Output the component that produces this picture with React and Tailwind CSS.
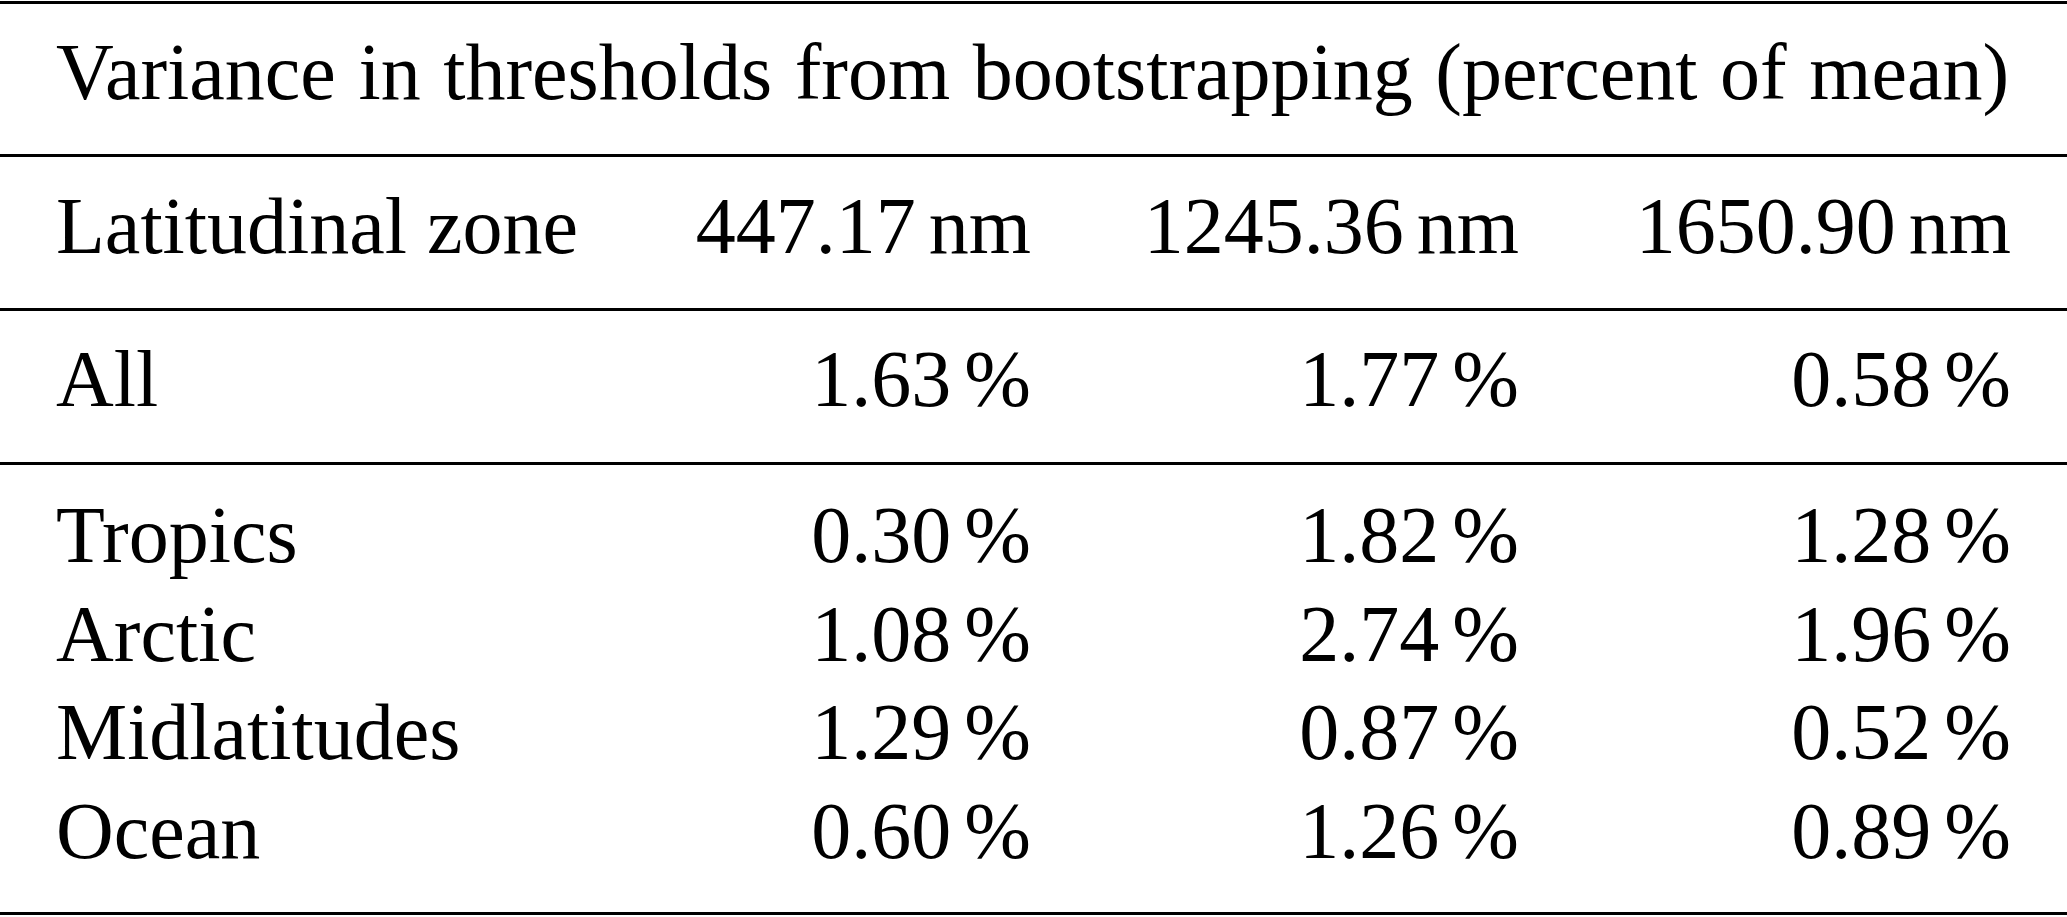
import React from "react";

const rows = [
  ["Tropics", "0.30", "1.82", "1.28"],
  ["Arctic", "1.08", "2.74", "1.96"],
  ["Midlatitudes", "1.29", "0.87", "0.52"],
  ["Ocean", "0.60", "1.26", "0.89"],
];

function Val({ v, unit }) {
  return (
    <div className="text-right whitespace-nowrap">
      {v}
      <span className="ml-[13px]">{unit}</span>
    </div>
  );
}

const grid = "grid grid-cols-[560px_415px_488px_492px] pl-[56px]";

export default function App() {
  return (
    <div className="w-[2067px] h-[917px] bg-white text-black text-[80px] leading-[98px] overflow-hidden font-['Liberation_Serif','Times_New_Roman',serif]">
      <div className="mt-[1px] h-[3px] bg-black" />
      <div className="h-[150px] pt-[19px] pl-[56px] whitespace-nowrap [word-spacing:2.6px]">
        Variance in thresholds from bootstrapping (percent of mean)
      </div>
      <div className="h-[3px] bg-black" />
      <div className={`${grid} h-[151px] pt-[20px]`}>
        <div className="whitespace-nowrap">Latitudinal zone</div>
        <Val v="447.17" unit="nm" />
        <Val v="1245.36" unit="nm" />
        <Val v="1650.90" unit="nm" />
      </div>
      <div className="h-[3px] bg-black" />
      <div className={`${grid} h-[151px] pt-[19px]`}>
        <div>All</div>
        <Val v="1.63" unit="%" />
        <Val v="1.77" unit="%" />
        <Val v="0.58" unit="%" />
      </div>
      <div className="h-[3px] bg-black" />
      <div className={`${grid} h-[447px] pt-[21px] leading-[98.7px] content-start`}>
        {rows.map((r) => (
          <React.Fragment key={r[0]}>
            <div>{r[0]}</div>
            <Val v={r[1]} unit="%" />
            <Val v={r[2]} unit="%" />
            <Val v={r[3]} unit="%" />
          </React.Fragment>
        ))}
      </div>
      <div className="h-[3px] bg-black" />
    </div>
  );
}
